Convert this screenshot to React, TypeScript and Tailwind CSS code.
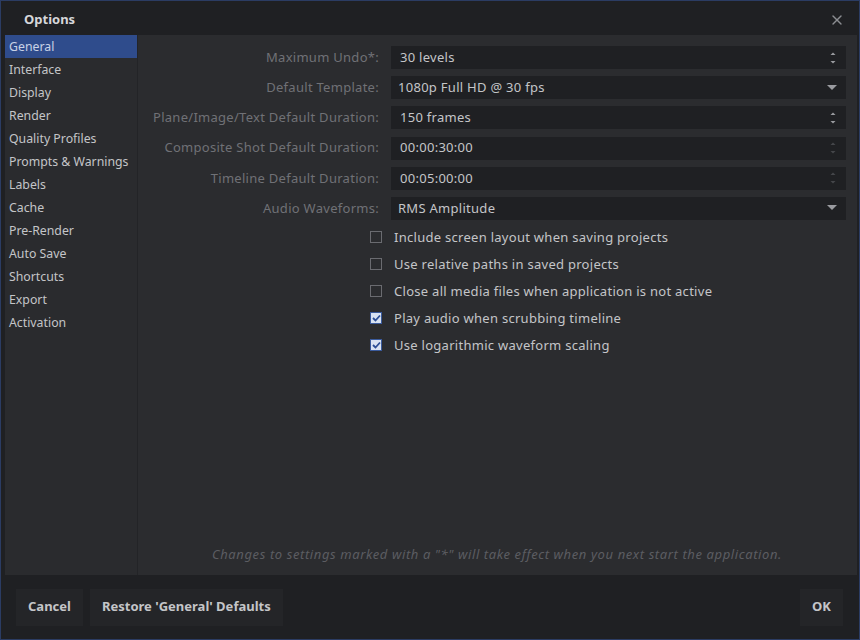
import React from 'react';
import { X } from 'lucide-react';

const sections = [
  'General',
  'Interface',
  'Display',
  'Render',
  'Quality Profiles',
  'Prompts & Warnings',
  'Labels',
  'Cache',
  'Pre-Render',
  'Auto Save',
  'Shortcuts',
  'Export',
  'Activation',
];

type Field = { label: string; value: string; kind: 'spin' | 'drop'; disabled?: boolean };

const fields: Field[] = [
  { label: 'Maximum Undo*:', value: '30 levels', kind: 'spin' },
  { label: 'Default Template:', value: '1080p Full HD @ 30 fps', kind: 'drop' },
  { label: 'Plane/Image/Text Default Duration:', value: '150 frames', kind: 'spin' },
  { label: 'Composite Shot Default Duration:', value: '00:00:30:00', kind: 'spin', disabled: true },
  { label: 'Timeline Default Duration:', value: '00:05:00:00', kind: 'spin', disabled: true },
  { label: 'Audio Waveforms:', value: 'RMS Amplitude', kind: 'drop' },
];

const checks = [
  { label: 'Include screen layout when saving projects', on: false },
  { label: 'Use relative paths in saved projects', on: false },
  { label: 'Close all media files when application is not active', on: false },
  { label: 'Play audio when scrubbing timeline', on: true },
  { label: 'Use logarithmic waveform scaling', on: true },
];

const Spin = ({ dim }: { dim?: boolean }) => (
  <svg width="8" height="16" viewBox="0 0 8 16" className={dim ? 'text-[#45464a]' : 'text-[#9a9ba0]'}>
    <path d="M1.5 5 L4 2.5 L6.5 5 Z" fill="currentColor" />
    <path d="M1.5 11 L4 13.5 L6.5 11 Z" fill="currentColor" />
  </svg>
);

const Drop = () => (
  <svg width="10" height="6" viewBox="0 0 10 6" className="text-[#9a9ba0]">
    <path d="M0 0 L10 0 L5 5 Z" fill="currentColor" />
  </svg>
);

const Check = ({ on }: { on: boolean }) =>
  on ? (
    <span className="w-[12px] h-[12px] bg-[#d8e2f2] border border-[#3a5a9c] flex items-center justify-center">
      <svg width="9" height="8" viewBox="0 0 9 8">
        <path d="M1 4 L3.5 6.5 L8 1.5" stroke="#2c4e96" strokeWidth="1.8" fill="none" />
      </svg>
    </span>
  ) : (
    <span className="w-[12px] h-[12px] border border-[#6a6b70] bg-transparent" />
  );

export default function App() {
  return (
    <div
      className="w-[860px] h-[640px] bg-[#1f2023] border border-[#2b3c63] flex flex-col text-[13px] text-[#c4c5c8] overflow-hidden"
      style={{ fontFamily: '"Noto Sans", "Open Sans", sans-serif' }}
    >
      {/* title bar */}
      <div className="h-[34px] shrink-0 flex items-center justify-between pl-[23px] pr-[14px] pt-[4px]">
        <span className="font-bold text-[#d6d7da]">Options</span>
        <X size={16} strokeWidth={2} className="text-[#8c8d92]" />
      </div>

      {/* body */}
      <div className="flex h-[540px] shrink-0 pl-[4px] pr-[2px]">
        <div className="w-[133px] bg-[#2a2b2e] border-r border-[#232427] flex flex-col text-[12.3px]">
          {sections.map((s, i) => (
            <div
              key={s}
              className={`h-[23px] flex items-center pl-[4px] pt-[2px] ${i === 0 ? 'bg-[#2f4c8c] text-[#c9d2e6]' : ''}`}
            >
              {s}
            </div>
          ))}
        </div>

        <div className="flex-1 bg-[#2b2c2f] flex flex-col pr-[11px] tracking-[0.28px]">
          <div className="flex flex-col gap-[7.2px] pt-[11px]">
            {fields.map((f) => (
              <div key={f.label} className="flex items-center h-[23px]">
                <div className="w-[253px] text-right pr-[12px] text-[#707176]">{f.label}</div>
                <div className="flex-1 h-[23px] bg-[#1f2023] flex items-center justify-between pl-[9px] pr-[9px]">
                  <span className={f.kind === 'drop' ? '-ml-[2px]' : ''}>{f.value}</span>
                  {f.kind === 'spin' ? <Spin dim={f.disabled} /> : <Drop />}
                </div>
              </div>
            ))}
          </div>

          <div className="flex flex-col gap-[8px] pt-[8px] pl-[232px]">
            {checks.map((c) => (
              <div key={c.label} className="flex items-center gap-[12px] h-[19px]">
                <Check on={c.on} />
                <span>{c.label}</span>
              </div>
            ))}
          </div>

          <div className="mt-auto pb-[11px] text-center italic text-[#5c5d62] pl-[10px] tracking-[0.6px]">
            Changes to settings marked with a "*" will take effect when you next start the application.
          </div>
        </div>
      </div>

      {/* footer */}
      <div className="flex-1 flex items-center justify-between pl-[15px] pr-[16px]">
        <div className="flex gap-[7px]">
          <button className="h-[37px] px-[12px] bg-[#242528] font-bold text-[#c4c5c8]">Cancel</button>
          <button className="h-[37px] px-[12px] bg-[#242528] font-bold text-[#c4c5c8]">
            Restore 'General' Defaults
          </button>
        </div>
        <button className="h-[37px] px-[12px] bg-[#242528] font-bold text-[#c4c5c8]">OK</button>
      </div>
    </div>
  );
}
